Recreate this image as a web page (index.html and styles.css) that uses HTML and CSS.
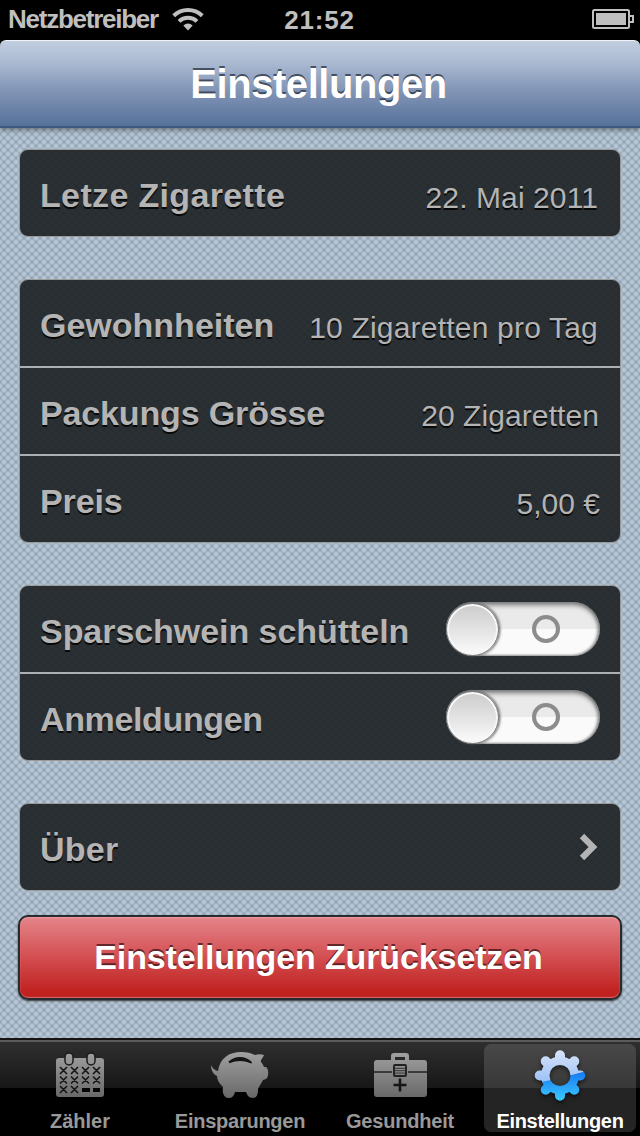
FILE: index.html
```html
<!DOCTYPE html>
<html lang="de">
<head>
<meta charset="utf-8">
<title>Einstellungen</title>
<link rel="stylesheet" href="styles.css">
</head>
<body>
<div class="screen">
  <div class="status">
    <div class="carrier"><span class="carrier-name">Netzbetreiber</span>
      <svg class="wifi" width="32" height="24" viewBox="0 0 32 24"><g fill="none" stroke="#bfbfbf" stroke-width="4"><path d="M1.7 8.7a20.5 20.5 0 0 1 28.6 0"/><path d="M7 14.4a13 13 0 0 1 18 0"/></g><path d="M11.3 18.6q4.7-4 9.4 0L16 23.5z" fill="#bfbfbf"/></svg>
    </div>
    <div class="clock">21:52</div>
    <svg class="battery" width="42" height="20" viewBox="0 0 42 20"><rect x="1" y="1" width="36" height="18" rx="1.5" fill="none" stroke="#bfbfbf" stroke-width="2"/><rect x="4" y="4" width="30" height="12" fill="#bfbfbf"/><path d="M38 7h3v6h-3" fill="none" stroke="#bfbfbf" stroke-width="2"/></svg>
  </div>
  <header class="navbar"><h1>Einstellungen</h1></header>
  <main class="content">
    <section class="group">
      <div class="row"><span class="label l1">Letze Zigarette</span><span class="value v1">22. Mai 2011</span></div>
    </section>
    <section class="group">
      <div class="row"><span class="label l2">Gewohnheiten</span><span class="value v2">10 Zigaretten pro Tag</span></div>
      <div class="row"><span class="label l3">Packungs Grösse</span><span class="value v3">20 Zigaretten</span></div>
      <div class="row"><span class="label l4">Preis</span><span class="value v4">5,00 €</span></div>
    </section>
    <section class="group">
      <div class="row"><span class="label l5">Sparschwein schütteln</span><span class="switch"><span class="knob"></span><span class="off"></span></span></div>
      <div class="row"><span class="label l6">Anmeldungen</span><span class="switch"><span class="knob"></span><span class="off"></span></span></div>
    </section>
    <section class="group">
      <div class="row"><span class="label l7">Über</span><svg class="chevron" width="19" height="28" viewBox="0 0 19 28"><path d="M3 3L14 14L3 25" fill="none" stroke="#b4b4b4" stroke-width="6.2"/></svg></div>
    </section>
    <button class="reset"><span>Einstellungen Zurücksetzen</span></button>
  </main>
  <nav class="tabs">
    <a class="tab"><svg class="icon" width="60" height="56" viewBox="0 0 60 56">
      <defs><linearGradient id="grey" gradientUnits="userSpaceOnUse" x1="0" y1="4" x2="0" y2="52"><stop offset="0" stop-color="#a0a0a0"/><stop offset="1" stop-color="#656565"/></linearGradient></defs>
      <rect x="6" y="10" width="48" height="39" rx="3" fill="url(#grey)"/>
      <g fill="url(#grey)" stroke="#1b1b1b" stroke-width="1.5"><rect x="15" y="5" width="8" height="12" rx="4"/><rect x="37" y="5" width="8" height="12" rx="4"/></g>
      <path d="M10 19l7 7m0-7l-7 7M21 19l7 7m0-7l-7 7M32 19l7 7m0-7l-7 7M43 19l7 7m0-7l-7 7M10 28.5l7 7m0-7l-7 7M21 28.5l7 7m0-7l-7 7M32 28.5l7 7m0-7l-7 7M43 28.5l7 7m0-7l-7 7M10 38l7 7m0-7l-7 7M21 38l7 7m0-7l-7 7" stroke="#151515" stroke-width="1.6" fill="none"/>
      <path d="M32 40h8v4h-8zM43 40h7v4h-7z" fill="#050505"/></svg><span class="t1">Zähler</span></a>
    <a class="tab"><svg class="icon" width="60" height="56" viewBox="0 0 60 56">
      <path d="M8 23C10 10 19 4 31 4c6 0 10 1 14 3 3-1 6-1 9 0-1 3-4 5-3 7q2 2 3 5l2 0c3 2 3 10 0 12l-3 1c-2 4-4 6-5 9 0 5-1 9-5 9-4 0-6-3-7-6H25c-1 4-3 6-6 6-5 0-7-5-6-11-4-4-6-7-6-11C3 26 1 22 1 17q2 5 7 6z" fill="url(#grey)"/>
      <path d="M19 14.5c6-6 16-6 22 0q-11-5-22 0" fill="#141414" stroke="#141414" stroke-width="1.8" stroke-linejoin="round"/></svg><span class="t2">Einsparungen</span></a>
    <a class="tab"><svg class="icon" width="60" height="56" viewBox="0 0 60 56">
      <path d="M7 12h14V8q0-3 3-3h12q3 0 3 3v4h15q3 0 3 3v31q0 3-3 3H7q-3 0-3-3V15q0-3 3-3zM25 12h10V9H25z" fill-rule="evenodd" fill="url(#grey)"/>
      <path d="M4 24h18M38 24h19" stroke="#222" stroke-width="1.3"/><rect x="24" y="17" width="12" height="11" rx="1" fill="none" stroke="#202020" stroke-width="1.9"/><path d="M25 20.3h10M25 22.7h10M25 25.1h10" stroke="#333" stroke-width="1"/><path d="M30 30.5v13M23.5 37h13" stroke="#151515" stroke-width="2.6"/></svg><span class="t3">Gesundheit</span></a>
    <a class="tab active"><svg class="icon" width="60" height="56" viewBox="0 0 60 56">
      <defs><linearGradient id="pale" x1="0" y1="0" x2="0" y2="1"><stop offset="0" stop-color="#dce5fa"/><stop offset="1" stop-color="#70aaf3"/></linearGradient><linearGradient id="blue" gradientUnits="userSpaceOnUse" x1="0" y1="24" x2="0" y2="52"><stop offset="0" stop-color="#1779f2"/><stop offset="1" stop-color="#3ac9ff"/></linearGradient>
      <mask id="gear"><g transform="translate(30 27.5)"><circle r="19" fill="#fff"/><g stroke="#fff" stroke-width="10" stroke-linecap="round"><path d="M0-20.3V20.3M-20.3 0H20.3M-14.3-14.3L14.3 14.3M14.3-14.3L-14.3 14.3"/></g><circle r="10.5" fill="#000"/></g></mask></defs>
      <g mask="url(#gear)"><path d="M0 0h60v56H0z" fill="url(#pale)"/><path d="M0 36Q25 32 60 22v34H0z" fill="url(#blue)"/></g></svg><span class="t4">Einstellungen</span></a>
  </nav>
</div>
</body>
</html>
```
FILE: styles.css
```css
* { box-sizing: border-box; }
body { margin: 0; background: #000; font-family: "Liberation Sans", Arial, sans-serif; }
.screen { width: 640px; height: 1136px; display: flex; flex-direction: column; overflow: hidden; background: #000; }
.status { height: 40px; flex: none; display: grid; grid-template-columns: 1fr auto 1fr; align-items: center; padding: 0 6px 2px 8px; color: #bfbfbf; font-weight: bold; font-size: 26px; }
.carrier { display: flex; align-items: center; gap: 14px; letter-spacing: -1.25px; }
.carrier-name { width: 150px; white-space: nowrap; }
.clock { padding: 2px 3px 0 0; letter-spacing: .8px; }
.battery { justify-self: end; }
.navbar { height: 88px; flex: none; border-radius: 6px 6px 0 0; background: linear-gradient(#c1cedf, #acbad2 25%, #8295b6 58%, #56719a); border-top: 1px solid #eff3f7; border-bottom: 2px solid #3c587f; display: flex; align-items: center; justify-content: center; box-shadow: 0 2px 5px rgba(0,0,0,.4); position: relative; z-index: 1; }
h1 { margin: 0; padding-right: 3px; color: #fff; font-size: 40px; line-height: 46px; letter-spacing: -.45px; text-shadow: 0 -2px 0 rgba(40,50,65,.75); }
.content { flex: 1; padding: 21px 19px 0; display: flex; flex-direction: column; background: repeating-linear-gradient(45deg, rgba(80,105,125,.25) 0, transparent 2px 3.657px, rgba(80,105,125,.25) 5.657px), repeating-linear-gradient(-45deg, rgba(80,105,125,.25) 0, transparent 2px 3.657px, rgba(80,105,125,.25) 5.657px), #bac9d7; }
.group { border: 1px solid #999; border-radius: 9px; background: rgba(23,27,29,.88); margin-bottom: 42px; }
.row { height: 86px; padding: 0 20px; display: flex; align-items: center; justify-content: space-between; white-space: nowrap; }
.row + .row { height: 88px; border-top: 2px solid #adb0b2; }
.label { font-size: 34px; font-weight: bold; color: #b4b4b4; text-shadow: 0 2px 0 #080808; padding-top: 4px; }
.value { font-size: 30px; color: #b4b4b4; text-shadow: 0 2px 0 #080808; padding-top: 10px; }
.l1 { letter-spacing: .35px; }
.l3, .l4 { letter-spacing: -.14px; }
.l5 { letter-spacing: -.05px; }
.l6 { letter-spacing: -.36px; }
.l7 { letter-spacing: .25px; }
.v1 { letter-spacing: .1px; margin-right: 2px; }
.v2 { letter-spacing: .2px; margin-right: 2px; }
.v3 { letter-spacing: .08px; margin-right: 1px; }
.switch { width: 154px; height: 54px; border-radius: 27px; display: flex; align-items: center; background: radial-gradient(circle at 129px 45px, transparent 0 18px, transparent 18px) , linear-gradient(#eaeaea 0 50%, #fafafa 50% 100%); box-shadow: inset 0 3px 5px #777, inset -2px 0 3px #999, inset 0 -1px 2px #aaa; }
.knob { width: 53px; height: 53px; border-radius: 50%; border: 1px solid #777; background: linear-gradient(#cbcbcb, #fbfbfb); box-shadow: inset 0 0 0 2px #f7f7f7, 1px 0 3px #555; }
.off { width: 28px; height: 28px; border: 4px solid #8c8c8c; border-radius: 50%; margin-left: 33px; }
.chevron { margin-right: 2px; }
.reset { height: 85px; flex: none; margin: -18px -1px 0; border: 2px solid #272b31; border-radius: 10px; background: linear-gradient(#e4858a, #d34e51 50%, #c02220 92%); color: #fff; font: bold 34px "Liberation Sans", Arial, sans-serif; letter-spacing: -.12px; text-shadow: 0 -2px 0 rgba(60,20,25,.75); box-shadow: inset 0 1px 1px #ef9da0, inset 0 -1px 1px #d96a6a, 0 1px 2px #333; padding: 0 3px 0 0; white-space: nowrap; }
.tabs { height: 98px; flex: none; display: grid; grid-template-columns: 160px 160px 160px 1fr; border-top: 2px solid #131313; padding: 4px 4px 4px 0; background: linear-gradient(#5b5b5b 0 2px, #2f2f2f 2px, #171717 48px, #000 48px); }
.tab { display: flex; flex-direction: column; align-items: center; padding-top: 4px; color: #999; font-size: 20px; font-weight: bold; line-height: 26px; border-radius: 7px; white-space: nowrap; }
.icon { flex: none; margin-bottom: 4px; }
.t2 { letter-spacing: -.25px; }
.t3 { letter-spacing: -.2px; }
.t4 { letter-spacing: -.3px; }
.active { color: #fff; margin-left: 4px; height: 88px; background: linear-gradient(#484848, #383838 44px, #242424 44px); }
.active .icon { filter: drop-shadow(0 2px 2px #0009); }
```
